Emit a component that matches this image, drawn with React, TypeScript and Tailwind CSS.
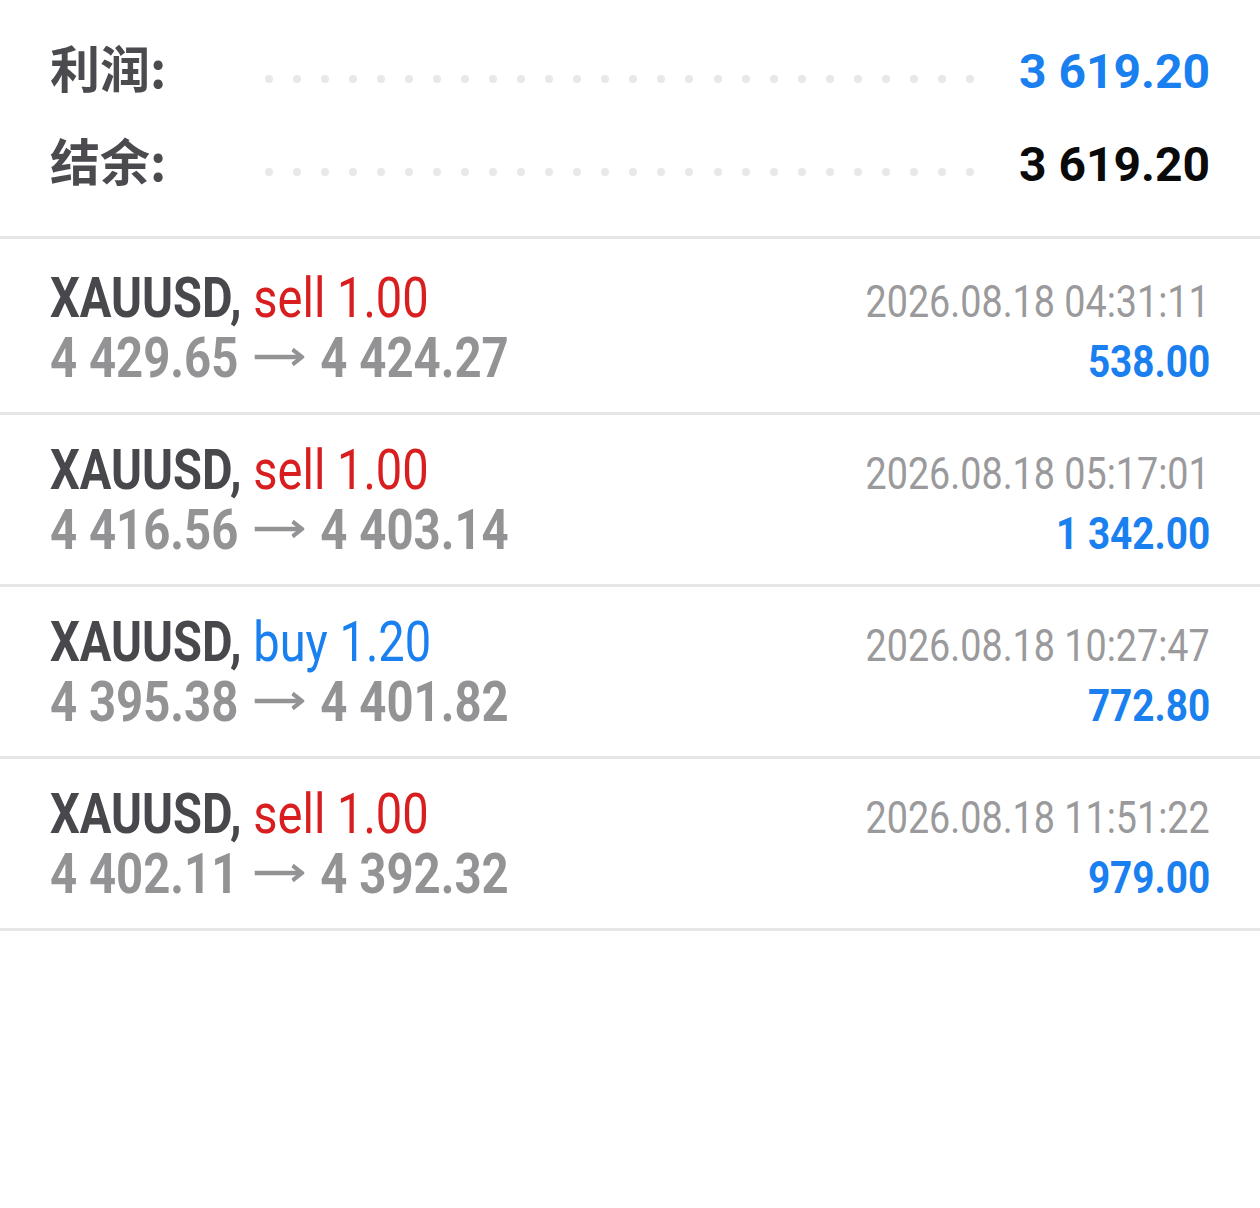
import React from "react";

type Trade = {
  side: "sell" | "buy";
  vol: string;
  open: string;
  close: string;
  time: string;
  profit: string;
};

const trades: Trade[] = [
  { side: "sell", vol: "1.00", open: "4 429.65", close: "4 424.27", time: "2026.08.18 04:31:11", profit: "538.00" },
  { side: "sell", vol: "1.00", open: "4 416.56", close: "4 403.14", time: "2026.08.18 05:17:01", profit: "1 342.00" },
  { side: "buy", vol: "1.20", open: "4 395.38", close: "4 401.82", time: "2026.08.18 10:27:47", profit: "772.80" },
  { side: "sell", vol: "1.00", open: "4 402.11", close: "4 392.32", time: "2026.08.18 11:51:22", profit: "979.00" },
];

const dots = Array.from({ length: 26 }, (_, i) => i);

function SummaryRow({ label, value, valueClass }: { label: string; value: string; valueClass: string }) {
  return (
    <div className="flex items-baseline h-[93px]">
      <span className="font-['Noto_Sans_CJK_SC',sans-serif] font-bold text-[50px] leading-[93px] text-[#4a4a4f] w-[215px] shrink-0">
        {label}
      </span>
      <div className="flex-1 self-start mt-[55px] mr-[45px] flex justify-between">
        {dots.map((d) => (
          <span key={d} className="block w-[8px] h-[8px] rounded-full bg-[#e8e8e8]" />
        ))}
      </div>
      <span className={`font-bold text-[48px] leading-[93px] ${valueClass}`}>{value}</span>
    </div>
  );
}

function Arrow() {
  return (
    <svg
      width="59"
      height="20"
      viewBox="0 0 59 20"
      className="inline-block mx-[19px] align-[10px]"
      fill="none"
      stroke="#939396"
      strokeWidth="4.5"
    >
      <path d="M0 10H56" />
      <path d="M45 2.5L56 10L45 17.5" strokeLinejoin="miter" />
    </svg>
  );
}

function TradeRow({ t, first }: { t: Trade; first: boolean }) {
  return (
    <div className={`border-t-[3px] border-[#e6e6e6] px-[50px] pb-[24px] ${first ? "pt-[29px]" : "pt-[25px]"}`}>
      <div className="flex items-baseline justify-between h-[60px] leading-[60px]">
        <span className="inline-block origin-left scale-x-[0.84] whitespace-nowrap text-[56px]">
          <span className="font-bold text-[#48484c]">XAUUSD,</span>{" "}
          <span className={t.side === "sell" ? "text-[#d81e1e]" : "text-[#1a80f0]"}>
            {t.side} {t.vol}
          </span>
        </span>
        <span className="inline-block origin-right scale-x-[0.838] whitespace-nowrap text-[45px] text-[#9a9a9c]">
          {t.time}
        </span>
      </div>
      <div className="flex items-baseline justify-between h-[60px] leading-[60px]">
        <span className="inline-block origin-left scale-x-[0.845] whitespace-nowrap text-[56px] font-bold text-[#939396]">
          {t.open}
          <Arrow />
          {t.close}
        </span>
        <span className="inline-block origin-right scale-x-[0.86] whitespace-nowrap text-[45px] font-bold text-[#1a80f0]">
          {t.profit}
        </span>
      </div>
    </div>
  );
}

export default function App() {
  return (
    <div className="min-h-[1208px] w-[1260px] bg-white font-[Roboto,sans-serif]">
      <div className="px-[50px] pt-[20px] pb-[30px]">
        <SummaryRow label="利润:" value="3 619.20" valueClass="text-[#1a80f0]" />
        <SummaryRow label="结余:" value="3 619.20" valueClass="text-[#0a0a0a]" />
      </div>
      {trades.map((t, i) => (
        <TradeRow key={i} t={t} first={i === 0} />
      ))}
      <div className="border-t-[3px] border-[#e6e6e6]" />
    </div>
  );
}
